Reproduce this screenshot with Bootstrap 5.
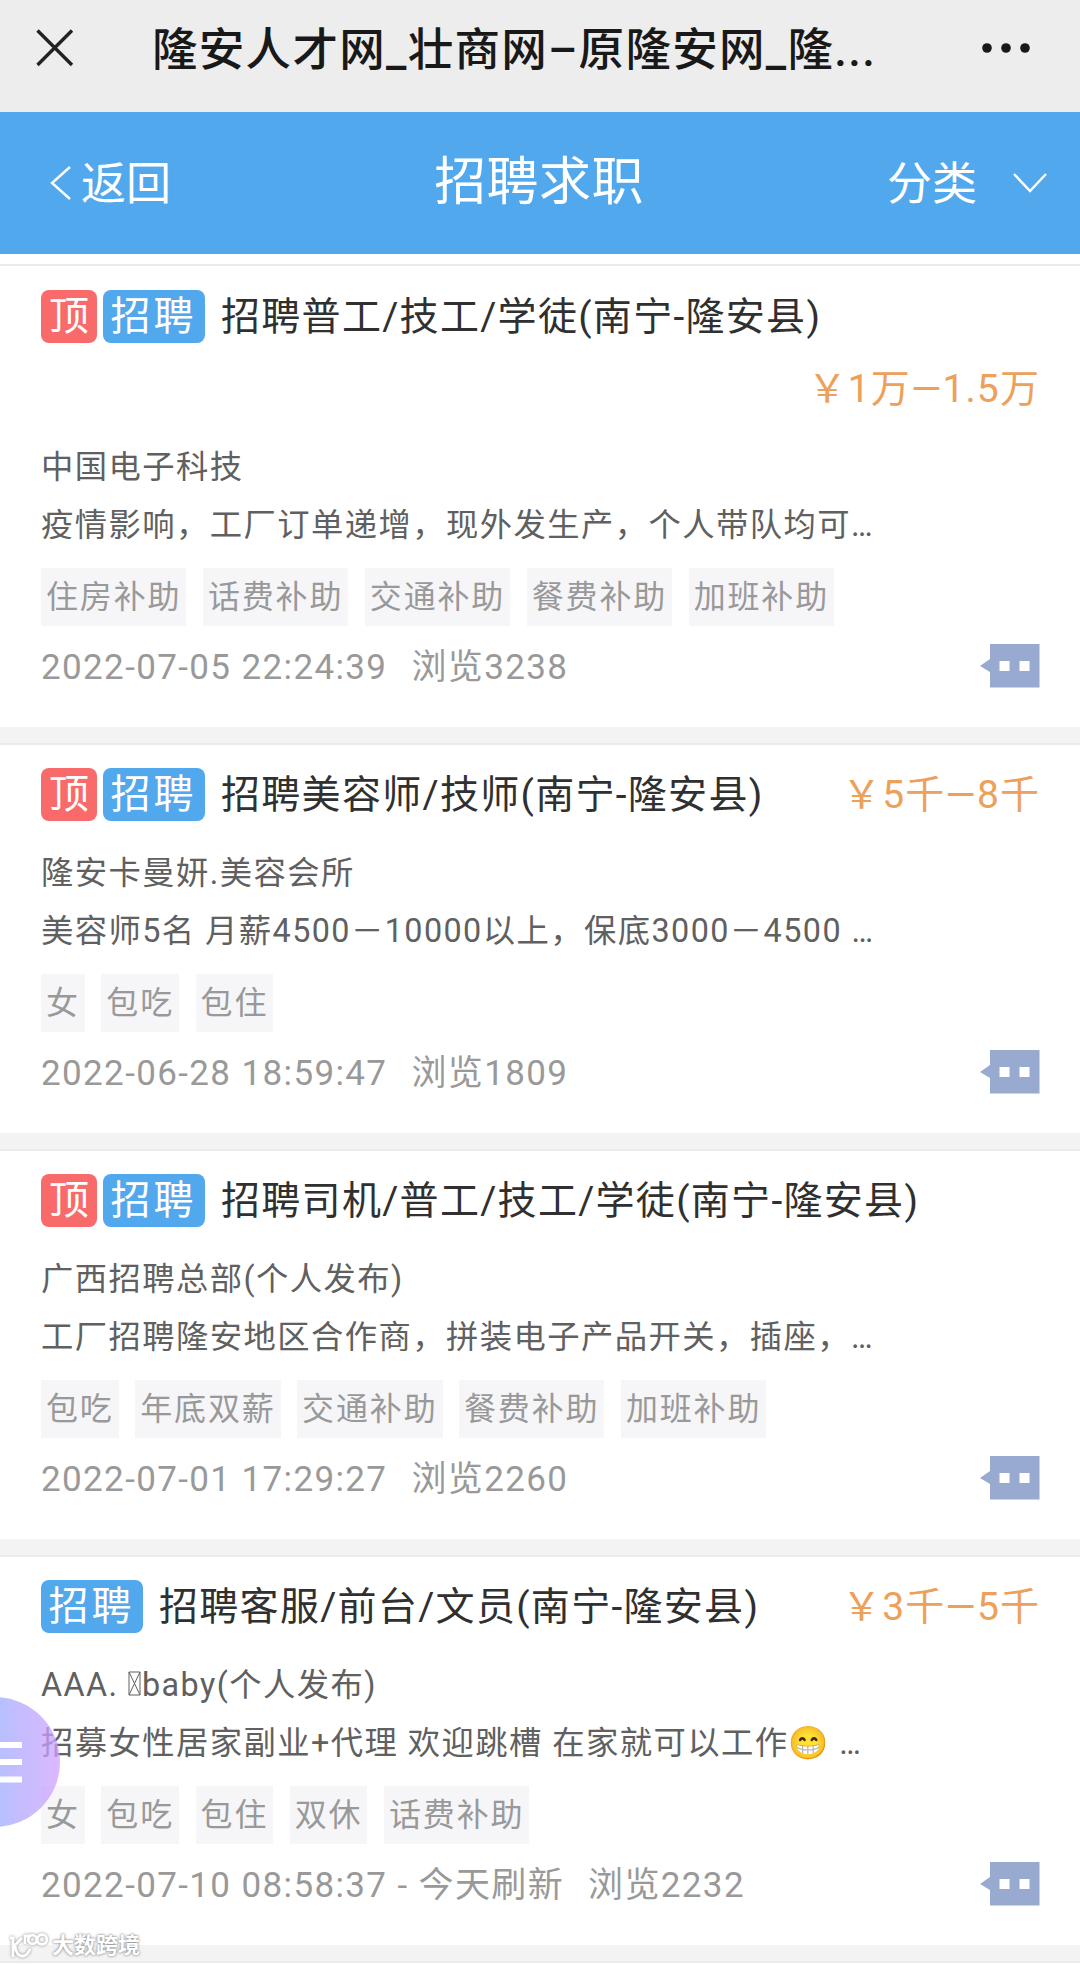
<!DOCTYPE html>
<html lang="zh-CN">
<head>
<meta charset="utf-8">
<meta name="viewport" content="width=device-width, initial-scale=1">
<title>隆安人才网</title>
<link href="https://cdn.jsdelivr.net/npm/bootstrap@5.3.0/dist/css/bootstrap.min.css" rel="stylesheet">
<style>
body{font-family:Roboto,"Noto Sans CJK SC",sans-serif;background:#fff;width:1080px;height:1965px;overflow:hidden;position:relative}
.wx-bar{height:112px;background:#ededed;color:#191919;padding:0 50px 0 36px}
.wx-close{margin-bottom:16px}
.wx-more{margin-bottom:17px}
.wx-title{font-size:45.5px;font-weight:500;line-height:102px;height:112px;margin-left:78px;letter-spacing:1.3px;white-space:nowrap}
.app-bar{height:142px;background:#52a8ec;color:#fff;padding:0 33px 0 50px}
.side-link{font-size:45px;line-height:142px;color:#fff;text-decoration:none}
.side-text{margin:3px 0 0 1px}
.side-arrow{margin-left:36px}
.app-title{font-size:52px;line-height:142px;height:142px;padding-left:21px;letter-spacing:.4px}
.top-line{height:12px;border-bottom:2px solid #ebebeb}
.job{height:388px;padding:23px 40px 0 41px;background:#fff}
.job-tall{height:461px;padding-top:24px}
.job-gap{height:18px;background:#f3f3f3;border-bottom:2px solid #ebebeb}
.job-head{height:53px;margin-bottom:22px;white-space:nowrap}
.job-tall .job-head{height:125px;align-content:space-between}
.tagbox{height:53px;line-height:54px;border-radius:8px;color:#fff;font-size:40px;text-align:center}
.tag-top{background:#f96b6b;width:56px;margin-right:6px}
.tag-job{background:#52a8ec;width:102px;margin-right:16px;letter-spacing:3px;padding-right:1px}
.job-name{font-size:39px;line-height:55px;height:53px;letter-spacing:1.3px;color:#303030;font-weight:400;margin:0}
.pay{font-size:39px;line-height:54px;height:53px;letter-spacing:1.1px;color:#eda05a}
.info{font-size:32.3px;line-height:60px;height:58px;letter-spacing:1.45px;color:#606060;white-space:pre}
.tofu{width:14px;height:25px}
.perks{gap:16.5px;margin-top:15px}
.perk{font-size:32px;letter-spacing:1.85px;line-height:58px;height:58px;padding:0 5px;background:#f6f6f9;color:#999}
.meta{height:57px;margin-top:13px;font-size:35px;letter-spacing:1.37px;color:#999;white-space:pre;line-height:58px}
.views{margin-left:24px}
.reply{width:60px;height:44px;margin-bottom:4px}
.fab{position:absolute;left:-71px;top:1697px;width:131px;height:130px;border-radius:50%;background:linear-gradient(90deg,rgba(150,172,255,.75) 45%,rgba(209,160,255,.75))}
.fab svg{position:absolute;left:71px;top:45px}
.wmark{position:absolute;left:8px;top:1930px;color:#fff;font-size:22px;font-weight:700;line-height:32px;text-shadow:0 0 3px #888,0 0 2px #aaa}
.wmark svg{filter:drop-shadow(0 0 1.500px #888);margin-right:3px}
svg{display:block;flex:none}
</style>
</head>
<body>
<svg class="d-none"><symbol id="reply" viewBox="0 0 60 44"><path d="M10 0H59.500V43.500H10V28L0 22 10 15ZM19.500 17V27H29.500V17ZM39.500 17V27H49.500V17Z" fill="#98aad0" fill-rule="evenodd"/></symbol></svg>
<header class="wx-bar d-flex align-items-center">
  <svg class="wx-close" width="38" height="38" viewBox="0 0 38 38"><path d="M1.5 1.5 36 36M36 1.5 1.5 36" stroke="#222" stroke-width="3.4"/></svg>
  <div class="wx-title">隆安人才网_壮商网–原隆安网_隆...</div>
  <svg class="wx-more ms-auto" width="48" height="12" viewBox="0 0 48 12"><g fill="#191919"><circle cx="5" cy="6" r="4.8"/><circle cx="24" cy="6" r="4.8"/><circle cx="43" cy="6" r="4.8"/></g></svg>
</header>
<nav class="app-bar d-flex align-items-center justify-content-between">
  <a class="side-link d-flex align-items-center" href="#"><svg class="me-2" width="22" height="34" viewBox="0 0 22 34"><path d="M20 1 2 17 20 33" fill="none" stroke="#fff" stroke-width="2.4"/></svg><span class="side-text">返回</span></a>
  <div class="app-title">招聘求职</div>
  <a class="side-link d-flex align-items-center" href="#"><span class="side-text">分类</span><svg class="side-arrow" width="34" height="20" viewBox="0 0 34 20"><path d="M1 1 17 18 33 1" fill="none" stroke="#fff" stroke-width="2.4"/></svg></a>
</nav>
<div class="top-line"></div>
<main>
<article class="job job-tall">
  <div class="job-head d-flex flex-wrap"><span class="tagbox tag-top">顶</span><span class="tagbox tag-job">招聘</span><h2 class="job-name">招聘普工/技工/学徒(南宁-隆安县)</h2><div class="w-100"></div><span class="pay ms-auto">￥1万—1.5万</span></div>
  <div class="info">中国电子科技</div>
  <div class="info">疫情影响，工厂订单递增，现外发生产，个人带队均可…</div>
  <div class="perks d-flex"><span class="perk">住房补助</span><span class="perk">话费补助</span><span class="perk">交通补助</span><span class="perk">餐费补助</span><span class="perk">加班补助</span></div>
  <div class="meta d-flex align-items-center"><span>2022-07-05 22:24:39</span><span class="views">浏览3238</span><svg class="reply ms-auto"><use href="#reply"/></svg></div>
</article>
<div class="job-gap"></div>
<article class="job">
  <div class="job-head d-flex"><span class="tagbox tag-top">顶</span><span class="tagbox tag-job">招聘</span><h2 class="job-name">招聘美容师/技师(南宁-隆安县)</h2><span class="pay ms-auto">￥5千—8千</span></div>
  <div class="info">隆安卡曼妍.美容会所</div>
  <div class="info">美容师5名 月薪4500－10000以上，保底3000－4500 …</div>
  <div class="perks d-flex"><span class="perk">女</span><span class="perk">包吃</span><span class="perk">包住</span></div>
  <div class="meta d-flex align-items-center"><span>2022-06-28 18:59:47</span><span class="views">浏览1809</span><svg class="reply ms-auto"><use href="#reply"/></svg></div>
</article>
<div class="job-gap"></div>
<article class="job">
  <div class="job-head d-flex"><span class="tagbox tag-top">顶</span><span class="tagbox tag-job">招聘</span><h2 class="job-name">招聘司机/普工/技工/学徒(南宁-隆安县)</h2></div>
  <div class="info">广西招聘总部(个人发布)</div>
  <div class="info">工厂招聘隆安地区合作商，拼装电子产品开关，插座，…</div>
  <div class="perks d-flex"><span class="perk">包吃</span><span class="perk">年底双薪</span><span class="perk">交通补助</span><span class="perk">餐费补助</span><span class="perk">加班补助</span></div>
  <div class="meta d-flex align-items-center"><span>2022-07-01 17:29:27</span><span class="views">浏览2260</span><svg class="reply ms-auto"><use href="#reply"/></svg></div>
</article>
<div class="job-gap"></div>
<article class="job">
  <div class="job-head d-flex"><span class="tagbox tag-job">招聘</span><h2 class="job-name">招聘客服/前台/文员(南宁-隆安县)</h2><span class="pay ms-auto">￥3千—5千</span></div>
  <div class="info">AAA. <svg class="tofu d-inline-block align-baseline" viewBox="0 0 14 25"><path d="M1 1H12V24H1ZL12 24M12 1 1 24" fill="none" stroke="#606060"/></svg>baby(个人发布)</div>
  <div class="info">招募女性居家副业+代理 欢迎跳槽 在家就可以工作😁 …</div>
  <div class="perks d-flex"><span class="perk">女</span><span class="perk">包吃</span><span class="perk">包住</span><span class="perk">双休</span><span class="perk">话费补助</span></div>
  <div class="meta d-flex align-items-center"><span>2022-07-10 08:58:37 - 今天刷新</span><span class="views">浏览2232</span><svg class="reply ms-auto"><use href="#reply"/></svg></div>
</article>
<div class="job-gap"></div>
</main>
<div class="fab"><svg width="23" height="42" viewBox="0 0 23 42"><path d="M0 3H22M0 20H22M0 37.500H22" stroke="#fff" stroke-width="6"/></svg></div>
<div class="wmark d-flex align-items-center"><svg width="41" height="28" viewBox="0 0 41 28"><g fill="none" stroke="#fff" stroke-width="2.8"><path d="M2 6H5V25M14 6 7 13C8 27 18 27 22 17M17 12V4H23"/><circle cx="24.500" cy="7.500" r="4.300"/><circle cx="34" cy="7.500" r="4.800"/></g></svg><span>大数跨境</span></div>
<script src="https://cdn.jsdelivr.net/npm/bootstrap@5.3.0/dist/js/bootstrap.bundle.min.js"></script>
</body>
</html>
